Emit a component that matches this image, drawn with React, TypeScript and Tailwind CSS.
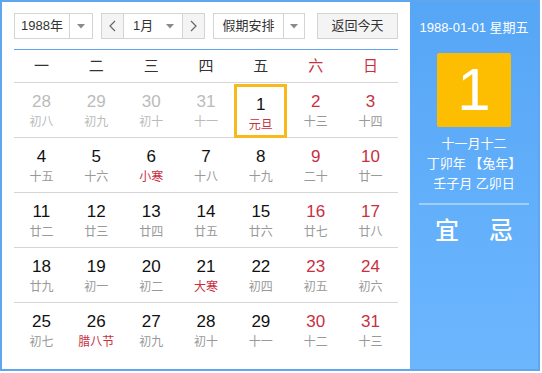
import React from 'react';

type Day = { n: number; lunar: string; muted?: boolean; red?: boolean; redLunar?: boolean; selected?: boolean };

const weeks: Day[][] = [
  [
    { n: 28, lunar: '初八', muted: true },
    { n: 29, lunar: '初九', muted: true },
    { n: 30, lunar: '初十', muted: true },
    { n: 31, lunar: '十一', muted: true },
    { n: 1, lunar: '元旦', redLunar: true, selected: true },
    { n: 2, lunar: '十三', red: true },
    { n: 3, lunar: '十四', red: true },
  ],
  [
    { n: 4, lunar: '十五' },
    { n: 5, lunar: '十六' },
    { n: 6, lunar: '小寒', redLunar: true },
    { n: 7, lunar: '十八' },
    { n: 8, lunar: '十九' },
    { n: 9, lunar: '二十', red: true },
    { n: 10, lunar: '廿一', red: true },
  ],
  [
    { n: 11, lunar: '廿二' },
    { n: 12, lunar: '廿三' },
    { n: 13, lunar: '廿四' },
    { n: 14, lunar: '廿五' },
    { n: 15, lunar: '廿六' },
    { n: 16, lunar: '廿七', red: true },
    { n: 17, lunar: '廿八', red: true },
  ],
  [
    { n: 18, lunar: '廿九' },
    { n: 19, lunar: '初一' },
    { n: 20, lunar: '初二' },
    { n: 21, lunar: '大寒', redLunar: true },
    { n: 22, lunar: '初四' },
    { n: 23, lunar: '初五', red: true },
    { n: 24, lunar: '初六', red: true },
  ],
  [
    { n: 25, lunar: '初七' },
    { n: 26, lunar: '腊八节', redLunar: true },
    { n: 27, lunar: '初九' },
    { n: 28, lunar: '初十' },
    { n: 29, lunar: '十一' },
    { n: 30, lunar: '十二', red: true },
    { n: 31, lunar: '十三', red: true },
  ],
];

const weekdays = ['一', '二', '三', '四', '五', '六', '日'];

const font = { fontFamily: '"Liberation Sans", "Noto Sans CJK SC", sans-serif' };

function Caret() {
  return (
    <svg width="8" height="5" viewBox="0 0 8 5" aria-hidden="true">
      <path d="M0 0h8L4 4.5z" fill="#8a8a8a" />
    </svg>
  );
}

function Chevron({ dir }: { dir: 'l' | 'r' }) {
  return (
    <svg width="7" height="12" viewBox="0 0 7 12" aria-hidden="true">
      <path d={dir === 'l' ? 'M6 1L1 6l5 5' : 'M1 1l5 5-5 5'} fill="none" stroke="#666" strokeWidth="1.2" />
    </svg>
  );
}

function Select({ label, width, labelW }: { label: string; width: string; labelW: string }) {
  return (
    <div className={`flex h-[26px] ${width} border border-[#d4d4d4] bg-white`}>
      <div className={`flex ${labelW} items-center justify-center border-r border-[#d4d4d4] text-[13px] text-[#333]`}>
        {label}
      </div>
      <div className="flex flex-1 items-center justify-center">
        <Caret />
      </div>
    </div>
  );
}

export default function App() {
  return (
    <div className="flex h-[371px] w-[540px] border-2 border-[#5fa6ee] bg-white" style={font}>
      {/* ── Left: calendar grid ─────────────────────── */}
      <div className="w-[408px] px-3 pt-[11px]">
        <div className="flex items-center">
          <Select label="1988年" width="w-[79px]" labelW="w-[55px]" />
          <div className="ml-2 flex h-[26px] w-[104px] border border-[#d4d4d4]">
            <div className="flex w-[22px] items-center justify-center border-r border-[#d4d4d4] bg-[#f4f4f4]">
              <Chevron dir="l" />
            </div>
            <div className="flex w-[59px] items-center border-r border-[#d4d4d4] pl-[9px] text-[13px] text-[#333]">
              <span className="flex-1">1月</span>
              <span className="mr-[8px] flex">
                <Caret />
              </span>
            </div>
            <div className="flex flex-1 items-center justify-center bg-[#f4f4f4]">
              <Chevron dir="r" />
            </div>
          </div>
          <div className="ml-2">
            <Select label="假期安排" width="w-[92px]" labelW="w-[70px]" />
          </div>
          <div className="ml-auto flex h-[26px] w-[81px] items-center justify-center border border-[#d4d4d4] bg-[#f4f4f4] text-[13px] text-[#333]">
            返回今天
          </div>
        </div>

        <div className="mt-[10px] h-px bg-[#5fa6ee]" />

        <div className="grid h-[33px] grid-cols-7 border-b border-[#d6d6d6]">
          {weekdays.map((w, i) => (
            <div
              key={w}
              className={`flex items-center justify-center text-[15px] ${i >= 5 ? 'text-[#c8303f]' : 'text-[#333]'}`}
            >
              {w}
            </div>
          ))}
        </div>

        {weeks.map((week, wi) => (
          <div
            key={wi}
            className={`grid h-[55px] grid-cols-7 ${wi < weeks.length - 1 ? 'border-b border-[#d6d6d6]' : ''}`}
          >
            {week.map((d, di) => (
              <div key={di} className="p-px">
                <div
                  className={`flex h-full flex-col items-center pt-[8px] ${
                    d.selected ? 'border-[3px] border-[#f7b91c] pt-[5px]' : ''
                  }`}
                >
                  <span
                    className={`text-[17px] leading-[20px] ${
                      d.muted ? 'text-[#bbb]' : d.red ? 'text-[#c8303f]' : 'text-[#111]'
                    }`}
                  >
                    {d.n}
                  </span>
                  <span
                    className={`text-[12px] leading-[20px] ${
                      d.redLunar ? 'text-[#c8303f]' : d.muted ? 'text-[#bbb]' : 'text-[#999]'
                    }`}
                  >
                    {d.lunar}
                  </span>
                </div>
              </div>
            ))}
          </div>
        ))}
      </div>

      {/* ── Right: today panel ──────────────────────── */}
      <div className="flex flex-1 flex-col items-center bg-gradient-to-b from-[#56a6f6] to-[#6cb6fe] text-white">
        <div className="mt-[16px] text-[13px] leading-[20px]">1988-01-01 星期五</div>
        <div className="mt-[15px] flex h-[74px] w-[74px] items-center justify-center rounded-[2px] bg-[#fdbd00] text-[60px] leading-none">
          1
        </div>
        <div className="mt-[7px] flex flex-col items-center text-[13px] leading-[20px]">
          <span>十一月十二</span>
          <span>丁卯年 【兔年】</span>
          <span>壬子月 乙卯日</span>
        </div>
        <div className="mt-[9px] h-[2px] w-[110px] bg-white/40" />
        <div className="mt-[12px] flex gap-[30px] text-[24px] font-medium leading-[28px]">
          <span>宜</span>
          <span>忌</span>
        </div>
      </div>
    </div>
  );
}
